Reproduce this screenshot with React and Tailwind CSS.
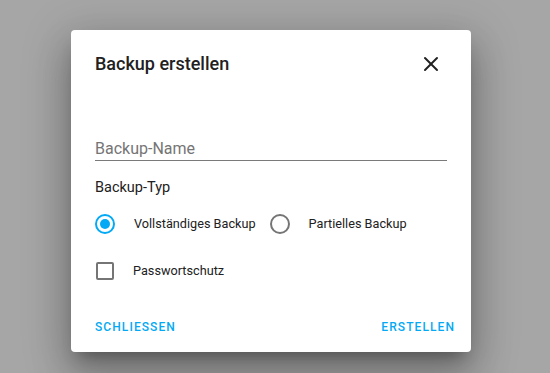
import { X } from 'lucide-react';

const Radio = ({ checked, label }) => (
  <label className="flex items-center h-10">
    <span className="w-10 h-10 flex items-center justify-center">
      <span
        className={`w-5 h-5 rounded-full border-2 flex items-center justify-center ${checked ? 'border-[#03a9f4]' : 'border-[#757575]'}`}
      >
        {checked && <span className="w-2.5 h-2.5 rounded-full bg-[#03a9f4]" />}
      </span>
    </span>
    <span className="ml-[9px] text-[12.7px] text-[#212121]">{label}</span>
  </label>
);

export default function App() {
  return (
    <div
      className="w-[550px] h-[373px] bg-[#a6a6a6] flex items-start pl-[71px] pt-[30px]"
      style={{ fontFamily: 'Roboto, "Liberation Sans", sans-serif' }}
    >
      <div className="w-[400px] h-[322px] bg-white rounded-[4px] shadow-[0_11px_15px_-7px_rgba(0,0,0,0.3),0_24px_38px_3px_rgba(0,0,0,0.2),0_9px_46px_8px_rgba(0,0,0,0.15)] flex flex-col">
        {/* header */}
        <div className="flex items-center justify-between pl-6 pr-[28px] pt-[22px]">
          <h2 className="text-[18px] font-medium text-[#212121] leading-6">Backup erstellen</h2>
          <X size={24} strokeWidth={2} className="text-[#212121]" />
        </div>

        {/* content */}
        <div className="px-6 pt-[63px] flex flex-col">
          <div className="border-b border-[#7a7a7a] pb-[1px]">
            <span className="text-[16px] text-[#757575] leading-5 block">Backup-Name</span>
          </div>
          <div className="mt-[17px] text-[14.5px] text-[#212121] leading-5">Backup-Typ</div>
          <div className="flex items-center mt-[6px] -ml-[10px] gap-[4px]">
            <Radio checked label="Vollständiges Backup" />
            <Radio label="Partielles Backup" />
          </div>
          <div className="flex items-center h-10 mt-[7px] -ml-[10px]">
            <span className="w-10 h-10 flex items-center justify-center">
              <span className="w-[18px] h-[18px] rounded-[2px] border-2 border-[#757575]" />
            </span>
            <span className="ml-[8px] text-[12.7px] text-[#212121]">Passwortschutz</span>
          </div>
        </div>

        {/* actions */}
        <div className="mt-auto flex items-center justify-between px-6 pb-[16px]">
          <button className="text-[12px] font-medium tracking-[0.09em] text-[#03a9f4]">SCHLIESSEN</button>
          <button className="text-[12px] font-medium tracking-[0.09em] text-[#03a9f4] -mr-[8px]">ERSTELLEN</button>
        </div>
      </div>
    </div>
  );
}
